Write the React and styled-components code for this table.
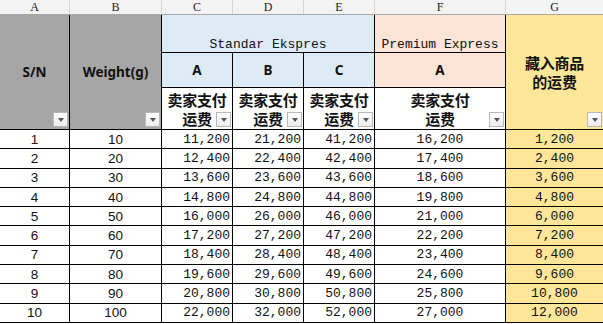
import styled, { createGlobalStyle } from "styled-components";

const GlobalStyle = createGlobalStyle`
  body {
    margin: 0;
    background: #ffffff;
  }
`;

const COLS = "69px 91px 70px 70px 70px 130px 97px";

const Page = styled.div`
  width: 603px;
  height: 324px;
  overflow: hidden;
  background: #ffffff;
`;

const LetterBar = styled.div`
  display: grid;
  grid-template-columns: ${COLS};
  gap: 1px;
  height: 14px;
  background: #d5d5d5;
  border-bottom: 1px solid #a9a9a9;
`;

const Letter = styled.div`
  background: #f3f3f3;
  display: flex;
  align-items: center;
  justify-content: center;
  font-family: "Liberation Serif", serif;
  font-size: 12px;
  color: #222;
  line-height: 14px;
`;

const Grid = styled.div`
  display: grid;
  grid-template-columns: ${COLS};
  grid-template-rows: 37px 34px 41px repeat(10, 18.3px);
  gap: 1px;
  background: #000000;
  border-bottom: 1px solid #000000;
`;

const Head = styled.div`
  position: relative;
  grid-column: ${(p) => p.$col};
  grid-row: ${(p) => p.$row};
  background: ${(p) => p.$bg || "#ffffff"};
  display: flex;
  flex-direction: column;
  align-items: center;
  justify-content: ${(p) => (p.$bottom ? "flex-end" : "center")};
  text-align: center;
  color: #111;
`;

const Title = styled.span`
  font-family: "Liberation Mono", monospace;
  font-size: 13px;
  line-height: 12px;
  padding-bottom: 1px;
`;

const Bold = styled.span`
  font-family: "Noto Sans", "Noto Sans CJK SC", sans-serif;
  font-weight: 700;
  font-size: 13.5px;
`;

const Cjk = styled.span`
  font-family: "Noto Sans CJK SC", sans-serif;
  font-weight: 700;
  font-size: 15px;
  line-height: 19px;
  letter-spacing: -0.2px;
`;

const Filter = styled.div`
  position: absolute;
  right: 1px;
  bottom: 2px;
  width: 15px;
  height: 15px;
  box-sizing: border-box;
  border: 1px solid #b8b8b8;
  background: linear-gradient(#ffffff, #ececec);
  display: flex;
  align-items: center;
  justify-content: center;
  &::after {
    content: "";
    border-left: 3.5px solid transparent;
    border-right: 3.5px solid transparent;
    border-top: 4px solid #555555;
  }
`;

const Cell = styled.div`
  background: ${(p) => p.$bg || "#ffffff"};
  display: flex;
  align-items: center;
  justify-content: ${(p) => (p.$right ? "flex-end" : "center")};
  padding-right: ${(p) => (p.$right ? "2px" : "0")};
  font-family: ${(p) =>
    p.$sans
      ? '"Liberation Sans Narrow", "Liberation Sans", sans-serif'
      : '"Liberation Mono", monospace'};
  font-size: ${(p) => (p.$sans ? "13.5px" : "13px")};
  color: #111;
  overflow: hidden;
  white-space: nowrap;
`;

const BLUE = "#ddebf7";
const PEACH = "#fce4d6";
const GRAY = "#a6a6a6";
const GOLD = "#ffe699";

const fmt = (n) => n.toLocaleString("en-US");

const rows = Array.from({ length: 10 }, (_, i) => {
  const base = 10000 + 1200 * (i + 1);
  return {
    sn: i + 1,
    weight: (i + 1) * 10,
    a: base,
    b: base + 10000,
    c: base + 30000,
    p: base + 5000,
    g: 1200 * (i + 1),
  };
});

const Paid = () => (
  <Cjk>
    卖家支付
    <br />
    运费
  </Cjk>
);

export default function App() {
  return (
    <Page>
      <GlobalStyle />
      <LetterBar>
        {["A", "B", "C", "D", "E", "F", "G"].map((l) => (
          <Letter key={l}>{l}</Letter>
        ))}
      </LetterBar>
      <Grid>
        <Head $col="1" $row="1 / 4" $bg={GRAY}>
          <Bold>S/N</Bold>
          <Filter />
        </Head>
        <Head $col="2" $row="1 / 4" $bg={GRAY}>
          <Bold>Weight(g)</Bold>
          <Filter />
        </Head>
        <Head $col="3 / 6" $row="1" $bg={BLUE} $bottom>
          <Title>Standar Ekspres</Title>
        </Head>
        <Head $col="6" $row="1" $bg={PEACH} $bottom>
          <Title>Premium Express</Title>
        </Head>
        <Head $col="7" $row="1 / 4" $bg={GOLD}>
          <Cjk>
            藏入商品
            <br />
            的运费
          </Cjk>
          <Filter />
        </Head>

        <Head $col="3" $row="2" $bg={BLUE}>
          <Bold>A</Bold>
        </Head>
        <Head $col="4" $row="2" $bg={BLUE}>
          <Bold>B</Bold>
        </Head>
        <Head $col="5" $row="2" $bg={BLUE}>
          <Bold>C</Bold>
        </Head>
        <Head $col="6" $row="2" $bg={PEACH}>
          <Bold>A</Bold>
        </Head>

        {[3, 4, 5, 6].map((c) => (
          <Head key={c} $col={String(c)} $row="3">
            <Paid />
            <Filter />
          </Head>
        ))}

        {rows.map((r) => [
          <Cell key={`sn${r.sn}`} $sans>
            {r.sn}
          </Cell>,
          <Cell key={`w${r.sn}`} $sans>
            {r.weight}
          </Cell>,
          <Cell key={`a${r.sn}`} $right>
            {fmt(r.a)}
          </Cell>,
          <Cell key={`b${r.sn}`} $right>
            {fmt(r.b)}
          </Cell>,
          <Cell key={`c${r.sn}`} $right>
            {fmt(r.c)}
          </Cell>,
          <Cell key={`p${r.sn}`}>{fmt(r.p)}</Cell>,
          <Cell key={`g${r.sn}`} $bg={GOLD}>
            {fmt(r.g)}
          </Cell>,
        ])}
      </Grid>
    </Page>
  );
}
